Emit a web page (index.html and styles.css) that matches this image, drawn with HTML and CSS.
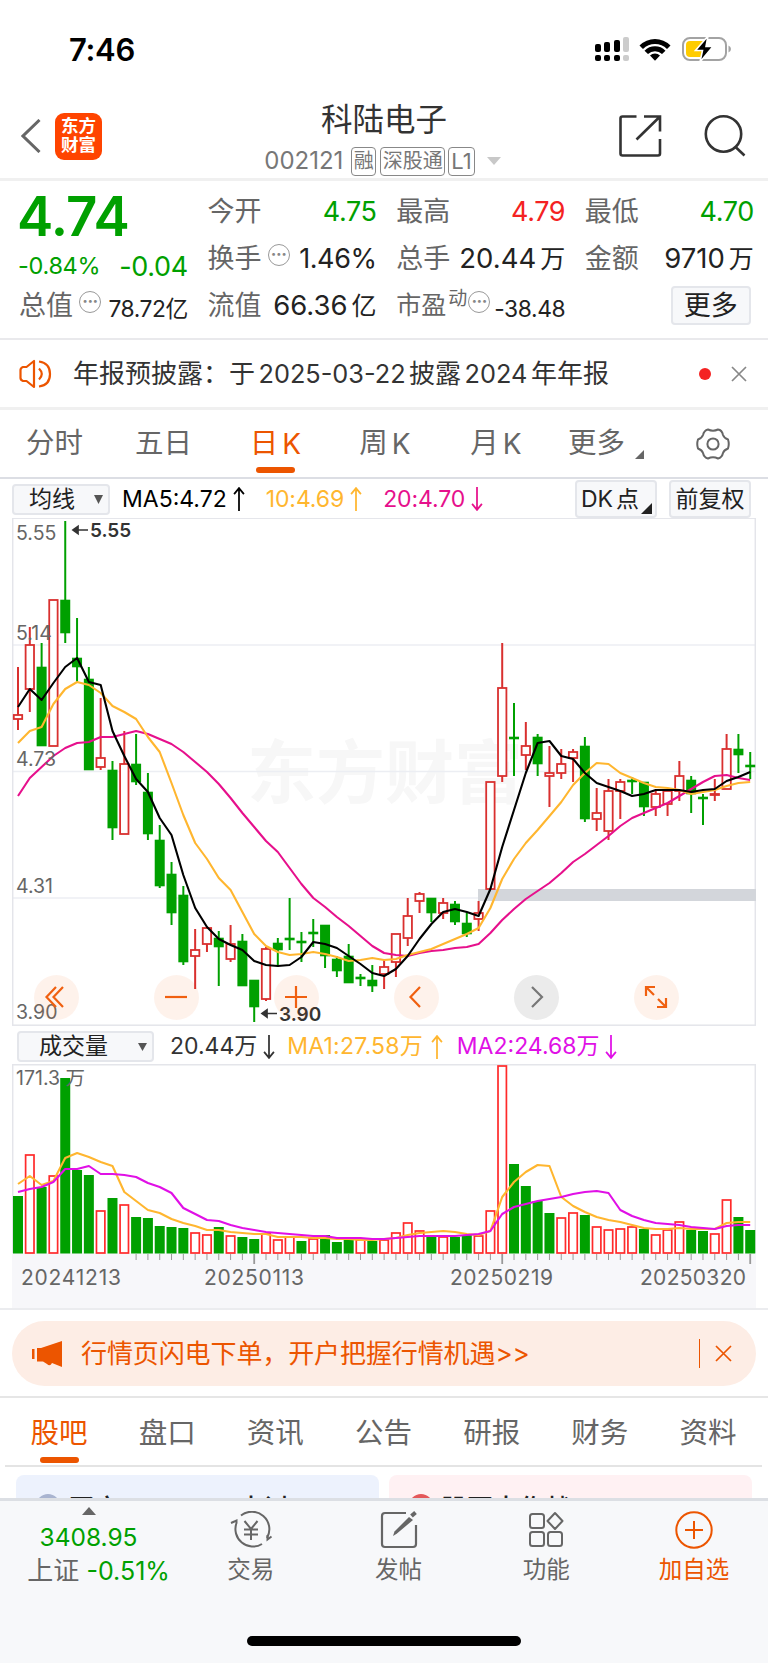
FILE: index.html
```
<!DOCTYPE html>
<html lang="zh-CN">
<head>
    <meta charset="UTF-8">
    <meta name="viewport" content="width=device-width, initial-scale=1.0">
    <title>科陆电子 002121</title>
    <link rel="stylesheet" href="styles.css">
</head>
<body>
    <div class="status-bar">
        <div class="time">7:46</div>
        <div class="status-icons">
            <svg width="34" height="26" viewBox="0 0 34 26">
                <g fill="#000">
                    <rect x="0" y="8" width="6" height="8" rx="2"/>
                    <rect x="9" y="6" width="6" height="10" rx="2"/>
                    <rect x="19" y="4" width="6" height="12" rx="2"/>
                    <rect x="0" y="19" width="6" height="6" rx="2"/>
                    <rect x="9" y="19" width="6" height="6" rx="2"/>
                    <rect x="19" y="19" width="6" height="6" rx="2"/>
                </g>
                <g fill="#ccc">
                    <rect x="28" y="1" width="6" height="15" rx="2"/>
                    <rect x="28" y="19" width="6" height="6" rx="2"/>
                </g>
            </svg>
            <svg class="wifi" width="32" height="24" viewBox="0 0 32 24">
                <path d="M.5 8.4 A22 22 0 0 1 31.5 8.4 L28 12 A17 17 0 0 0 4 12Z"/>
                <path d="M5.5 13.8 A14.6 14.6 0 0 1 26.5 13.8 L23 17 A10 10 0 0 0 9 17Z"/>
                <path d="M11 18.6 A7.2 7.2 0 0 1 21 18.6 L16 23.7Z"/>
            </svg>
            <svg class="battery" width="50" height="26" viewBox="0 0 50 26">
                <rect x="1" y="2" width="43" height="22" rx="7" fill="#fff" stroke="#a3a3a3" stroke-width="2"/>
                <path d="M46.5 9.5 Q49 10.5 49 13 T46.5 16.5Z" fill="#a3a3a3"/>
                <path d="M8 5 H22 V21 H8 Q4 21 4 17 V9 Q4 5 8 5Z" fill="#ffcc00"/>
                <path d="M26 0 L13.5 14.5 H20.5 L18 26 L31 10.5 H24Z" fill="#000" stroke="#fff" stroke-width="1.6"/>
            </svg>
        </div>
    </div>

    <div class="header">
        <div class="header-left">
            <svg width="20" height="34" viewBox="0 0 20 34"><path d="M18.5 1 L2 17 L18.5 33" fill="none" stroke="#666" stroke-width="3"/></svg>
            <div class="logo">东方<br>财富</div>
        </div>
        <div class="header-title">
            <div class="name">科陆电子</div>
            <div class="code">
                <span class="code-num">002121</span>
                <span class="tag">融</span>
                <span class="tag">深股通</span>
                <span class="tag level">L1</span>
                <svg class="caret" width="14" height="8" viewBox="0 0 14 8"><path d="M0 0H14L7 8Z" fill="#c8c8c8"/></svg>
            </div>
        </div>
        <div class="header-right">
            <svg width="43" height="42" viewBox="0 0 43 42" fill="none" stroke="#333" stroke-width="2.6">
                <path d="M17.5 1.5H3.5Q1.5 1.5 1.5 3.5V38.5Q1.5 40.5 3.5 40.5H39Q41 40.5 41 38.5V24"/>
                <path d="M25 1.5H41V16.5M40.5 2L17.5 24.5"/>
            </svg>
            <svg width="42" height="42" viewBox="0 0 42 42" fill="none" stroke="#333" stroke-width="2.6">
                <circle cx="19.5" cy="19" r="17.7"/>
                <path d="M31.5 32L40.5 40.5"/>
            </svg>
        </div>
    </div>

    <div class="quote">
        <div class="price-col">
            <div class="price">4.74</div>
            <div class="change"><span>-0.84%</span><span class="diff">-0.04</span></div>
        </div>
        <div class="item"><span>今开</span><b class="green">4.75</b></div>
        <div class="item"><span>最高</span><b class="red">4.79</b></div>
        <div class="item"><span>最低</span><b class="green">4.70</b></div>
        <div class="item"><span>换手</span><i class="dots">···</i><b>1.46%</b></div>
        <div class="item"><span>总手</span><b class="wide">20.44<em>万</em></b></div>
        <div class="item"><span>金额</span><b class="wide">9710<em>万</em></b></div>
        <div class="item"><span>总值</span><i class="dots">···</i><b class="small">78.72亿</b></div>
        <div class="item"><span>流值</span><b class="wide">66.36<em>亿</em></b></div>
        <div class="item"><span class="pe">市盈<sup>动</sup></span><i class="dots pe-dots">···</i><b class="small">-38.48</b></div>
        <div class="item item-more"><button class="more">更多</button></div>
    </div>

    <div class="notice">
        <svg width="34" height="30" viewBox="0 0 34 30" fill="none" stroke="#ec5500" stroke-width="2.2">
            <path d="M15 2V28L7.5 22H4Q1.5 21 1.5 19V11Q1.5 9 4 8H7.5Z" stroke-linejoin="round"/>
            <path d="M20 9.5Q25.5 15 20 20.5M20 2.5Q31 4 31 15T20 27.5"/>
        </svg>
        <div class="notice-text">年报预披露：<span>于</span><u>2025-03-22</u>披露<u>2024</u>年年报</div>
        <div class="dot"></div>
        <svg width="16" height="16" viewBox="0 0 16 16"><path d="M1 1L15 15M15 1L1 15" stroke="#888" stroke-width="1.7"/></svg>
    </div>

    <div class="periods">
        <div class="period">分时</div>
        <div class="period">五日</div>
        <div class="period active">日<u>K</u></div>
        <div class="period">周<u>K</u></div>
        <div class="period">月<u>K</u></div>
        <div class="period period-more">更多<svg width="9" height="9" viewBox="0 0 9 9"><path d="M9 0V9H0Z" fill="#666"/></svg></div>
        <div class="period">
            <svg width="34" height="32" viewBox="0 0 34 32" fill="none" stroke="#666" stroke-width="2" stroke-linejoin="round">
                <path d="M12 1.5Q17 4 22 1.5Q26 2 27 7Q28 10 32 11.5Q33.5 16 32 20.5Q28 22 27 25Q26 29.5 22 30.5Q17 28 12 30.5Q8 29.5 7 25Q6 22 2 20.5Q.5 16 2 11.5Q6 10 7 7Q8 2.5 12 1.5Z"/>
                <circle cx="17" cy="16" r="5.6"/>
            </svg>
        </div>
    </div>

    <div class="ma-row">
        <button class="select">均线<svg width="9" height="9" viewBox="0 0 9 9"><path d="M0 0H9L4.5 9Z" fill="#555"/></svg></button>
        <span class="ma ma5">MA5:4.72<svg class="arrow" viewBox="0 0 11 22"><path d="M5.5 22V1M1 6.5L5.5 1L10 6.5"/></svg></span>
        <span class="ma ma10">10:4.69<svg class="arrow" viewBox="0 0 11 22"><path d="M5.5 22V1M1 6.5L5.5 1L10 6.5"/></svg></span>
        <span class="ma ma20">20:4.70<svg class="arrow" viewBox="0 0 11 22"><path d="M5.5 0V21M1 15.5L5.5 21L10 15.5"/></svg></span>
        <div class="ma-buttons">
            <button class="dk"><span>DK</span>点<svg width="11" height="11" viewBox="0 0 11 11"><path d="M11 0V11H0Z" fill="#222"/></svg></button>
            <button>前复权</button>
        </div>
    </div>

    <div class="chart">
        <svg id="kline" width="744" height="508" viewBox="12 518 744 508"></svg>
        <div class="controls">
            <button><svg viewBox="0 0 24 24"><path d="M12 2L2.5 12L12 22M19 2L9.5 12L19 22"/></svg></button>
            <button><svg viewBox="0 0 24 24"><path d="M1 12H23"/></svg></button>
            <button><svg viewBox="0 0 24 24"><path d="M1 12H23M12 1V23"/></svg></button>
            <button><svg viewBox="0 0 24 24"><path d="M16 2L6.5 12L16 22"/></svg></button>
            <button class="off"><svg viewBox="0 0 24 24"><path d="M8 2L18 12L8 22"/></svg></button>
            <button><svg viewBox="0 0 24 24"><path d="M2 11V2H11M2 2L10 10M22 13V22H13M22 22L14 14"/></svg></button>
        </div>
    </div>

    <div class="vol-row">
        <button class="select">成交量<svg width="9" height="8" viewBox="0 0 9 8"><path d="M0 0H9L4.5 8Z" fill="#555"/></svg></button>
        <span class="ma vol-now">20.44万<svg class="arrow" viewBox="0 0 11 22"><path d="M5.5 0V21M1 15.5L5.5 21L10 15.5"/></svg></span>
        <span class="ma ma10">MA1:27.58万<svg class="arrow" viewBox="0 0 11 22"><path d="M5.5 22V1M1 6.5L5.5 1L10 6.5"/></svg></span>
        <span class="ma vol-ma2">MA2:24.68万<svg class="arrow" viewBox="0 0 11 22"><path d="M5.5 0V21M1 15.5L5.5 21L10 15.5"/></svg></span>
    </div>

    <div class="volume">
        <svg id="volume" width="744" height="244" viewBox="12 1064 744 244"></svg>
    </div>

    <div class="promo-wrap">
        <div class="promo">
            <svg width="32" height="28" viewBox="0 0 32 28" fill="#ec5500">
                <rect x="0" y="9" width="2.5" height="10"/>
                <path d="M5 8H9L30 1V27L20 23Q18 27 15 24L11 21.5H5Z"/>
            </svg>
            <span class="promo-text">行情页闪电下单，开户把握行情机遇&gt;&gt;</span>
            <span class="promo-line"></span>
            <svg width="17" height="17" viewBox="0 0 17 17"><path d="M1 1L16 16M16 1L1 16" stroke="#ec5500" stroke-width="1.7"/></svg>
        </div>
    </div>

    <div class="tabs">
        <div class="tab active">股吧</div>
        <div class="tab">盘口</div>
        <div class="tab">资讯</div>
        <div class="tab">公告</div>
        <div class="tab">研报</div>
        <div class="tab">财务</div>
        <div class="tab">资料</div>
    </div>

    <div class="cards">
        <div class="card blue"><i></i><span>买方</span><span class="card-end">去讨</span></div>
        <div class="card pink"><i></i><span>股票大作战</span></div>
    </div>

    <div class="bottom-bar">
        <div class="index">
            <svg width="14" height="8" viewBox="0 0 14 8"><path d="M0 8H14L7 0Z" fill="#666"/></svg>
            <div class="index-value">3408.95</div>
            <div class="index-name">上证 <span>-0.51%</span></div>
        </div>
        <div class="action">
            <svg width="44" height="38" viewBox="0 0 44 38" fill="none" stroke="#666" stroke-width="2">
                <path d="M12 4.5A17.5 17.5 0 0 1 38 27"/>
                <path d="M2 12L7.5 9.5V12A17.5 17.5 0 0 0 33 33"/>
                <path d="M42.5 25.5L38.5 28.5V24"/>
                <path d="M15.5 10L22 18L28.5 10M15 18.5H29M15 23.5H29M22 18V29"/>
            </svg>
            <span>交易</span>
        </div>
        <div class="action">
            <svg width="38" height="38" viewBox="0 0 38 38" fill="none" stroke="#666" stroke-width="2.2">
                <path d="M26 2H5Q2 2 2 5V33Q2 36 5 36H33Q36 36 36 33V14"/>
                <path d="M29 6L33 9L17 22.5L13 25L14.5 20.5Z" fill="#666" stroke="none"/>
                <path d="M31.5 5L35.5 1.5" stroke-width="4"/>
            </svg>
            <span>发帖</span>
        </div>
        <div class="action">
            <svg width="36" height="38" viewBox="0 0 36 38" fill="none" stroke="#666" stroke-width="2">
                <rect x="2" y="3" width="14" height="14" rx="2.5"/>
                <rect x="2" y="21" width="14" height="14" rx="2.5"/>
                <rect x="20" y="21" width="14" height="14" rx="2.5"/>
                <path d="M27 2L34.5 10L27 18L19.5 10Z" stroke-linejoin="round"/>
            </svg>
            <span>功能</span>
        </div>
        <div class="action orange">
            <svg width="38" height="38" viewBox="0 0 38 38" fill="none" stroke="#ec5500" stroke-width="2">
                <circle cx="19" cy="19" r="17.7"/>
                <path d="M10 19H28M19 10V28"/>
            </svg>
            <span>加自选</span>
        </div>
        <div class="home-line"></div>
    </div>

    <script src="chart.js"></script>
</body>
</html>
```

FILE: styles.css
```
* {
    box-sizing: border-box;
}

body {
    margin: 0;
    width: 768px;
    height: 1663px;
    overflow: hidden;
    background-color: #fff;
    color: #333;
    font-family: Inter, "Noto Sans CJK SC", sans-serif;
    font-size: 26px;
    line-height: 1;
}

svg {
    display: block;
    flex: none;
}

button {
    font: inherit;
    color: #222;
    padding: 0;
    background-color: #f7f8fa;
    border: 2px solid #e4e6eb;
    border-radius: 4px;
}

u {
    text-decoration: none;
}

/* status bar */
.status-bar {
    height: 98px;
    padding: 0 36px 0 69px;
    display: flex;
    align-items: center;
    justify-content: space-between;
}

.time {
    color: #000;
    font-size: 31px;
    font-weight: 600;
    letter-spacing: -0.3px;
}

.status-icons {
    display: flex;
    align-items: center;
}

.wifi {
    margin: 0 11px 0 10px;
}

/* header */
.header {
    height: 83px;
    border-bottom: 3px solid #f0f0f0;
    display: grid;
    grid-template-columns: 1fr auto 1fr;
}

.header-left {
    display: flex;
    gap: 14px;
    padding: 14px 0 0 21px;
    align-items: center;
    height: 62px;
}

.logo {
    width: 47px;
    height: 47px;
    border-radius: 9px;
    background-color: #ff4400;
    color: #fff;
    font-size: 17.5px;
    font-weight: 700;
    line-height: 19.5px;
    text-align: center;
    padding-top: 3px;
}

.header-title {
    display: flex;
    flex-direction: column;
    align-items: center;
}

.name {
    font-size: 31.5px;
    line-height: 44px;
}

.code {
    display: flex;
    align-items: center;
    height: 32px;
    margin-top: 3px;
    margin-right: 3px;
    color: #777;
}

.code-num {
    font-size: 24px;
    margin-right: 8px;
}

.tag {
    height: 29px;
    border: 1.5px solid #888;
    border-radius: 4px;
    font-size: 20px;
    line-height: 26px;
    padding: 0 1.5px;
    margin-right: 4px;
}

.level {
    font-size: 22px;
    padding: 0 2px;
    margin-left: -1px;
}

.caret {
    margin-left: 8px;
}

.header-right {
    display: flex;
    justify-content: flex-end;
    gap: 42px;
    padding: 17px 22px 0 0;
}

/* quote block */
.quote {
    height: 159px;
    border-bottom: 2px solid #e9e9ec;
    padding: 7px 14px 0 19px;
    display: grid;
    grid-template-columns: repeat(4, 169px);
    grid-template-rows: repeat(3, 47px);
    column-gap: 19.6px;
}

.price-col {
    grid-row: span 2;
    color: #00a000;
}

.price {
    font-size: 54.5px;
    font-weight: 600;
    line-height: 57px;
    letter-spacing: -0.8px;
    margin-left: -2px;
}

.change {
    display: flex;
    justify-content: space-between;
    align-items: center;
    font-size: 23.5px;
    height: 42px;
    letter-spacing: -0.3px;
    margin-left: -1px;
}

.diff {
    font-size: 27px;
}

.item {
    display: flex;
    align-items: center;
    color: #666;
    font-size: 27px;
}

.item b {
    margin-left: auto;
    font-weight: 400;
    color: #222;
    letter-spacing: -0.4px;
}

.item .wide {
    font-size: 27.5px;
    letter-spacing: 0;
}

.item em {
    font-style: normal;
    font-size: 25px;
    margin-left: 4px;
}

.item .small {
    font-size: 22.8px;
    padding-top: 8px;
}

.item .green {
    color: #00a000;
}

.item .red {
    color: #f42222;
}

.dots {
    width: 22px;
    height: 22px;
    margin: 0 0 8px 6px;
    border: 1.5px solid #999;
    border-radius: 50%;
    color: #888;
    font-style: normal;
    font-size: 17px;
    font-weight: 700;
    line-height: 19px;
    text-align: center;
    letter-spacing: -0.5px;
}

.pe {
    font-size: 25px;
}

.pe sup {
    font-size: 19px;
    line-height: 0;
    vertical-align: 9px;
    margin-left: 2px;
}

.pe-dots {
    margin-left: 1px;
}

.item-more {
    justify-content: flex-end;
}

.more {
    width: 80px;
    height: 39px;
    margin-right: 3px;
}

/* notice */
.notice {
    height: 70px;
    border-bottom: 3px solid #f0f0f0;
    padding: 0 21px 0 19px;
    display: flex;
    align-items: center;
}

.notice-text {
    flex: 1;
    margin-left: 20px;
    white-space: nowrap;
}

.notice-text u {
    font-size: 25.3px;
    margin: 0 3.5px;
}

.dot {
    width: 12px;
    height: 12px;
    border-radius: 50%;
    background-color: #f42222;
    margin-right: 20px;
}

/* period tabs */
.periods {
    height: 69px;
    border-bottom: 2px solid #dcdee4;
    display: grid;
    grid-template-columns: 109px 109px 115px 104px 118px 94px 119px;
    color: #666;
    font-size: 28.5px;
}

.period {
    display: flex;
    align-items: center;
    justify-content: center;
}

.period:last-child {
    padding-left: 8px;
}

.period u {
    margin-left: 4px;
    font-size: 28px;
}

.active {
    position: relative;
    color: #ec5500;
}

.active::after {
    content: "";
    position: absolute;
    left: calc(50% - 19.5px);
    bottom: 4px;
    width: 39px;
    height: 6px;
    border-radius: 3px;
    background-color: #ec5500;
}

.period-more {
    padding-left: 8px;
}

.period-more svg {
    margin: 22px 0 0 10px;
}

/* indicator rows */
.ma-row, .vol-row {
    display: flex;
    align-items: center;
    height: 39px;
    padding: 1px 17px 0 12px;
    font-size: 23px;
}

.select {
    display: flex;
    align-items: center;
    justify-content: space-between;
    width: 98px;
    height: 31px;
    padding: 0 5px 0 15px;
}

.ma {
    display: flex;
    align-items: center;
    white-space: nowrap;
}

.arrow {
    width: 12px;
    height: 24px;
    margin-left: 6px;
    fill: none;
    stroke: currentColor;
    stroke-width: 1.6;
}

.ma5 {
    color: #000;
    margin: 0 21px 0 12px;
}

.ma10 {
    color: #ffb62f;
    margin-right: 21px;
    letter-spacing: -0.1px;
}

.ma20 {
    color: #e6108c;
    letter-spacing: -0.1px;
}

.ma-buttons {
    display: flex;
    gap: 12px;
    margin-left: auto;
}

.ma-buttons button {
    width: 82px;
    height: 38px;
    white-space: nowrap;
}

.ma-buttons .dk {
    display: flex;
    align-items: center;
    padding-left: 4px;
}

.dk span {
    margin-right: 3px;
}

.dk svg {
    margin: 19px 0 0 2px;
}

/* chart */
.chart {
    position: relative;
    height: 509px;
    padding-left: 12px;
}

.controls {
    position: absolute;
    left: 33.5px;
    top: 456.5px;
    display: flex;
    gap: 75px;
}

.controls button {
    width: 45px;
    height: 45px;
    border: 0;
    border-radius: 50%;
    background-color: rgba(236, 85, 0, 0.08);
    display: flex;
    align-items: center;
    justify-content: center;
}

.controls svg {
    width: 24px;
    height: 24px;
    fill: none;
    stroke: #f06010;
    stroke-width: 2.2;
}

.controls .off {
    background-color: #ebebeb;
}

.controls .off svg {
    stroke: #777;
}

.vol-row {
    height: 37px;
    padding: 2px 17px 0 17px;
}

.vol-row .select {
    width: 137px;
    padding-left: 20px;
}

.vol-now {
    margin: 0 12px 0 16px;
}

.vol-row .ma10 {
    margin-right: 14px;
    letter-spacing: 0.2px;
}

.vol-row .ma10 .arrow {
    margin-left: 8px;
}

.vol-ma2 {
    color: #e010e6;
}

.volume {
    height: 246px;
    padding-left: 12px;
    border-bottom: 2px solid #ebecef;
}

.grid-line {
    stroke: #eceef3;
    stroke-width: 1.3;
}

.box {
    fill: none;
    stroke: #e4e5ea;
    stroke-width: 1.5;
}

.line {
    fill: none;
    stroke-width: 2.1;
    stroke-linejoin: round;
}

.axis-label {
    font-size: 19.5px;
    fill: #666;
}

.date {
    font-size: 21px;
    fill: #666;
}

.mark {
    font-size: 19px;
    font-weight: 600;
    fill: #333;
}

.watermark {
    font-size: 69px;
    font-weight: 700;
    fill: #f7f7f7;
}

/* promo */
.promo-wrap {
    height: 88px;
    padding: 11px 12px 0;
    border-bottom: 2px solid #e6e6e6;
}

.promo {
    height: 65px;
    border-radius: 33px;
    background-color: #fdede5;
    color: #ec5500;
    display: flex;
    align-items: center;
    padding: 0 24px 0 20px;
}

.promo-text {
    flex: 1;
    margin-left: 17px;
    letter-spacing: -0.1px;
}

.promo-line {
    width: 1.5px;
    height: 29px;
    background-color: #ec5500;
    margin-right: 15px;
}

/* tabs */
.tabs {
    height: 69px;
    margin: 0 6px 0 5px;
    border-bottom: 2px solid #e4e4e4;
    display: grid;
    grid-template-columns: repeat(7, 1fr);
    color: #666;
    font-size: 28.5px;
}

.tab {
    text-align: center;
    line-height: 70px;
}

.tab.active::after {
    bottom: 5px;
}

.cards {
    height: 31px;
    padding: 8px 16px 0;
    display: grid;
    grid-template-columns: 1fr 1fr;
    gap: 10px;
    overflow: hidden;
}

.card {
    height: 80px;
    border-radius: 8px;
    display: flex;
    align-items: flex-start;
    padding: 19px 0 0 20px;
    font-weight: 500;
    color: #222;
}

.card span {
    padding-top: 2px;
}

.card i {
    width: 24px;
    height: 24px;
    border-radius: 50%;
    margin-right: 8px;
}

.blue {
    background-color: #edf2fd;
}

.blue i {
    background-color: #a9b4d0;
}

.pink {
    background-color: #fff1f3;
}

.pink i {
    background-color: #e4585a;
}

.card .card-end {
    margin-left: 118px;
}

/* bottom bar */
.bottom-bar {
    position: relative;
    height: 165px;
    border-top: 3px solid #dcdfe4;
    background-color: #f7f8fa;
    display: grid;
    grid-template-columns: 177px repeat(4, 147.7px);
    align-items: start;
}

.index {
    display: flex;
    flex-direction: column;
    align-items: center;
    padding-top: 6px;
    white-space: nowrap;
    padding-left: 20px;
}

.index-value {
    color: #00a000;
    font-size: 24.5px;
    margin-top: 10px;
}

.index svg, .index-value {
    margin-right: 20px;
}

.index-name {
    margin-top: 8px;
    color: #666;
    font-size: 26px;
}

.index-name span {
    color: #00a000;
    font-size: 25px;
}

.action {
    display: flex;
    flex-direction: column;
    align-items: center;
    padding-top: 10px;
    color: #666;
    font-size: 23.5px;
}

.action span {
    margin-top: 9px;
}

.action.orange {
    color: #ec5500;
}

.home-line {
    position: absolute;
    left: 247px;
    top: 135px;
    width: 274px;
    height: 10px;
    border-radius: 5px;
    background-color: #000;
}
```

FILE: chart.js
```
const RED = '#d9302f';
const GREEN = '#00a000';
const VOL_RED = '#ff2a2a';
const STEP = 11.81;
const BASE = 1253;

// color, high, body top, body bottom, low
const candles = [
    ['r', 667, 715, 719, 730], ['r', 627, 645, 689, 712], ['g', 643, 667, 746, 746], ['r', 600, 600, 746, 746],
    ['g', 521, 600, 633, 643], ['g', 618, 658, 667, 683], ['g', 667, 679, 770, 770], ['r', 698, 758, 767, 770],
    ['g', 761, 770, 828, 840], ['r', 731, 764, 834, 834], ['g', 734, 764, 782, 785], ['g', 773, 792, 834, 840],
    ['g', 825, 840, 886, 888], ['g', 862, 874, 913, 925], ['g', 886, 895, 962, 965], ['r', 929, 950, 956, 989],
    ['r', 928, 928, 944, 952], ['g', 931, 938, 947, 986], ['r', 925, 944, 959, 962], ['g', 934, 941, 986, 986],
    ['g', 980, 980, 1007, 1022], ['r', 947, 949, 999, 1001], ['g', 938, 943, 950, 967], ['g', 898, 938, 940, 950],
    ['g', 932, 941, 943, 962], ['g', 919, 932, 934, 947], ['g', 925, 925, 956, 968], ['g', 956, 959, 971, 977],
    ['g', 944, 956, 983, 983], ['g', 974, 977, 979, 986], ['g', 965, 980, 986, 992], ['r', 960, 967, 974, 989],
    ['r', 934, 934, 962, 977], ['r', 898, 916, 938, 946], ['r', 892, 894, 901, 913], ['g', 898, 898, 913, 922],
    ['r', 898, 903, 913, 919], ['g', 901, 904, 922, 925], ['g', 913, 923, 934, 937], ['r', 901, 913, 919, 931],
    ['r', 782, 782, 889, 889], ['r', 643, 688, 776, 782], ['g', 703, 737, 739, 776], ['r', 722, 746, 755, 770],
    ['g', 734, 737, 764, 776], ['r', 746, 773, 776, 807], ['r', 749, 764, 773, 779], ['r', 749, 752, 758, 782],
    ['g', 737, 746, 819, 822], ['r', 788, 813, 819, 831], ['r', 779, 791, 831, 840], ['r', 779, 782, 791, 819],
    ['g', 777, 780, 782, 794], ['g', 782, 782, 807, 816], ['r', 791, 794, 807, 816], ['r', 791, 791, 804, 816],
    ['r', 761, 776, 791, 801], ['g', 776, 780, 794, 813], ['g', 794, 797, 799, 825], ['r', 779, 794, 795, 801],
    ['r', 734, 749, 789, 789], ['g', 734, 749, 755, 773], ['g', 752, 765, 767, 779]
];

const ma5 = [707, 689, 700, 683, 667, 658, 682, 685, 731, 756, 779, 792, 818, 835, 875, 908, 927, 939, 945, 950, 961,
    965, 966, 965, 957, 942, 944, 948, 956, 964, 973, 976, 969, 956, 939, 924, 912, 909, 912, 916, 889, 847, 810, 773,
    743, 741, 756, 759, 773, 783, 787, 791, 796, 794, 790, 790, 790, 792, 790, 789, 781, 777, 772];
const ma10 = [743, 731, 727, 704, 689, 682, 685, 693, 706, 712, 719, 737, 752, 783, 815, 843, 859, 878, 890, 912, 934,
    946, 952, 955, 954, 952, 954, 957, 961, 960, 958, 960, 959, 955, 952, 949, 944, 939, 934, 928, 908, 879, 859, 843,
    830, 816, 802, 785, 773, 763, 764, 773, 778, 783, 787, 788, 790, 794, 792, 790, 786, 783, 782];
const ma20 = [796, 778, 767, 756, 748, 743, 742, 737, 737, 734, 731, 734, 739, 744, 752, 762, 772, 784, 798, 813, 827,
    841, 852, 868, 884, 898, 907, 917, 926, 936, 946, 953, 955, 956, 953, 951, 950, 948, 947, 944, 933, 920, 909, 899,
    891, 883, 873, 862, 854, 845, 836, 826, 818, 813, 808, 803, 796, 789, 782, 776, 775, 778, 780];

const volumes = [1196, 1155, 1187, 1176, 1078, 1170, 1175, 1211, 1198, 1205, 1217, 1218, 1226, 1227, 1228, 1233, 1235,
    1227, 1236, 1237, 1239, 1234, 1240, 1237, 1241, 1239, 1235, 1242, 1239, 1240, 1241, 1240, 1233, 1223, 1231, 1236,
    1237, 1237, 1235, 1236, 1211, 1066, 1164, 1186, 1201, 1213, 1218, 1213, 1215, 1227, 1230, 1229, 1227, 1229, 1235,
    1230, 1222, 1230, 1231, 1234, 1200, 1217, 1230];
const greenVolumes = [0, 2, 4, 5, 6, 8, 10, 11, 12, 13, 14, 17, 19, 20, 24, 26, 27, 28, 30, 35, 37, 38, 42, 43, 44, 45,
    48, 53, 57, 58, 61, 62];
const volMa1 = [1184, 1176, 1185, 1181, 1158, 1153, 1157, 1162, 1166, 1192, 1201, 1210, 1213, 1219, 1223, 1226, 1230,
    1230, 1232, 1233, 1234, 1234, 1237, 1237, 1237, 1238, 1238, 1239, 1239, 1240, 1240, 1239, 1238, 1235, 1233, 1232,
    1231, 1232, 1234, 1235, 1231, 1197, 1182, 1172, 1165, 1166, 1197, 1206, 1212, 1217, 1220, 1222, 1225, 1228, 1229,
    1229, 1228, 1229, 1229, 1229, 1223, 1222, 1222];
const volMa2 = [1192, 1189, 1187, 1182, 1169, 1169, 1166, 1174, 1174, 1175, 1177, 1183, 1187, 1193, 1208, 1214, 1220,
    1221, 1225, 1228, 1230, 1232, 1233, 1234, 1235, 1236, 1236, 1238, 1238, 1238, 1239, 1239, 1238, 1237, 1236, 1236,
    1236, 1236, 1235, 1234, 1231, 1214, 1207, 1204, 1201, 1199, 1197, 1194, 1192, 1191, 1193, 1210, 1216, 1220, 1223,
    1224, 1225, 1227, 1228, 1229, 1226, 1225, 1225];

function xAt(i) {
    return 18 + i * STEP;
}

function line(values, color) {
    const points = values.map((y, i) => `${xAt(i).toFixed(1)},${y}`).join(' ');
    return `<polyline class="line" points="${points}" stroke="${color}"/>`;
}

function drawKline() {
    let out = '<text class="watermark" x="247" y="798">东方财富</text>';
    [645, 771.5, 898].forEach(y => {
        out += `<path class="grid-line" d="M12 ${y}H756"/>`;
    });
    out += '<rect class="box" x="12.7" y="518.2" width="742.6" height="507"/>';
    out += '<rect x="478" y="889" width="278" height="12" fill="#d3d6db"/>';

    candles.forEach(([color, high, top, bottom, low], i) => {
        const x = xAt(i);
        if (color === 'g') {
            out += `<path d="M${x} ${high}V${low}" stroke="${GREEN}" stroke-width="2"/>`;
            out += `<rect x="${x - 5}" y="${top - 0.3}" width="10" height="${bottom - top + 0.6}" fill="${GREEN}"/>`;
        } else {
            out += `<path d="M${x} ${high}V${top}M${x} ${bottom}V${low}" stroke="${RED}" stroke-width="2"/>`;
            out += `<rect x="${x - 4.2}" y="${top}" width="8.4" height="${bottom - top}" fill="#fff" stroke="${RED}" stroke-width="1.8"/>`;
        }
    });

    out += line(ma20, '#e6108c') + line(ma10, '#ffb62f') + line(ma5, '#000');

    [['5.55', 539.5], ['5.14', 640], ['4.73', 766], ['4.31', 893], ['3.90', 1019]].forEach(([text, y]) => {
        out += `<text class="axis-label" x="16" y="${y}">${text}</text>`;
    });

    // highest and lowest price
    out += '<path d="M73 530H88M73 530L78 526.5V533.5Z" stroke="#333" stroke-width="1.7" fill="#333"/>';
    out += '<text class="mark" x="90" y="537">5.55</text>';
    out += '<path d="M262 1013.5H277M262 1013.5L267 1010V1017Z" stroke="#333" stroke-width="1.7" fill="#333"/>';
    out += '<text class="mark" x="279" y="1021">3.90</text>';
    document.getElementById('kline').innerHTML = out;
}

function drawVolume() {
    let out = `<rect x="12" y="${BASE}" width="744" height="55" fill="#f7f7fa"/>`;
    out += `<path class="box" d="M12.7 ${BASE}V1064.7H755.3V${BASE}"/>`;

    volumes.forEach((top, i) => {
        const x = xAt(i);
        if (greenVolumes.includes(i)) {
            out += `<rect x="${x - 5}" y="${top}" width="10" height="${BASE + 0.5 - top}" fill="${GREEN}"/>`;
        } else {
            out += `<rect x="${x - 4.2}" y="${top}" width="8.4" height="${BASE - top}" fill="#fff" stroke="${VOL_RED}" stroke-width="1.7"/>`;
        }
        if (i >= 10) {
            const main = i === 20 || i === 41 || i === 62;
            out += `<path d="M${x} ${BASE + 1}V${main ? 1264 : 1260}" stroke="#999" stroke-width="${main ? 1.8 : 1}"/>`;
        }
    });

    out += line(volMa1, '#ffb62f') + line(volMa2, '#e010e6');
    out += '<text class="axis-label" x="16" y="1085">171.3 万</text>';
    [['20241213', 21, 100], ['20250113', 204, 100], ['20250219', 450, 103], ['20250320', 640, 106]].forEach(([text, x, w]) => {
        out += `<text class="date" x="${x}" y="1285" textLength="${w}">${text}</text>`;
    });
    document.getElementById('volume').innerHTML = out;
}

drawKline();
drawVolume();
```
